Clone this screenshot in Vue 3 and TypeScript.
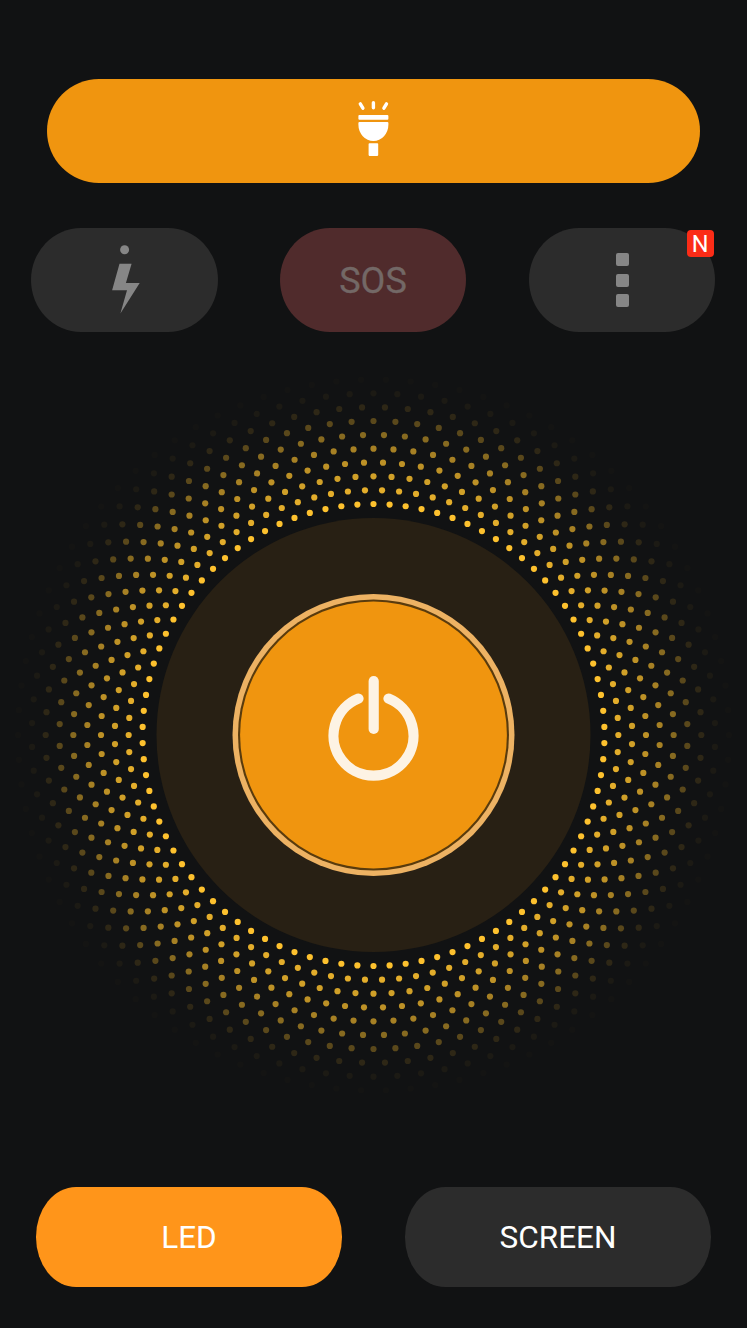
<script setup lang="ts">
interface Dot {
  x: number
  y: number
}
interface Ring {
  opacity: number
  dots: Dot[]
}

const DOTS_PER_RING = 90
const INNER_RADIUS = 231
const RING_GAP = 13.83
const opacities: number[] = [1, 0.89, 0.81, 0.73, 0.63, 0.5, 0.31, 0.12, 0.045, 0.012]

const rings: Ring[] = opacities.map((opacity, ring) => {
  const radius = INNER_RADIUS + ring * RING_GAP
  const dots = Array.from({ length: DOTS_PER_RING }, (_, i) => {
    const angle = ((i + (ring % 2) / 2) * 2 * Math.PI) / DOTS_PER_RING
    return { x: radius * Math.sin(angle), y: -radius * Math.cos(angle) }
  })
  return { opacity, dots }
})
</script>

<template>
  <main class="screen">
    <button class="torch" aria-label="Flashlight">
      <svg width="41" height="64" viewBox="0 0 41 64" fill="#fff">
        <g stroke="#fff" stroke-width="3.4" stroke-linecap="round">
          <path d="M7.3 8.9 9.9 13.2" />
          <path d="M20.4 7.8V12.8" />
          <path d="M33.5 8.9 30.9 13.2" />
        </g>
        <rect x="5.4" y="20" width="30" height="4.8" rx="1" />
        <path d="M5.4 28q0-1 1-1h28q1 0 1 1v1.6a15 16.4 0 0 1-30 0z" />
        <rect x="15.6" y="48.3" width="9.6" height="12.6" rx="0.8" />
      </svg>
    </button>

    <div class="modes">
      <button class="mode" aria-label="Strobe">
        <svg width="40" height="80" viewBox="0 0 40 80" fill="#868686">
          <circle cx="20.6" cy="9.8" r="4.5" />
          <path d="M15.5 23.7H27.6L21.9 43H35.7L16.4 73.6L23 50.3H8.1Z" />
        </svg>
      </button>
      <button class="mode sos">SOS</button>
      <button class="mode" aria-label="More">
        <span class="more"><i></i><i></i><i></i></span>
        <span class="badge">N</span>
      </button>
    </div>

    <svg class="dial" width="747" height="760" viewBox="-373.5 -380 747 760">
      <g v-for="(ring, r) in rings" :key="r" fill="#fdc12e" :opacity="ring.opacity">
        <circle v-for="(dot, i) in ring.dots" :key="i" :cx="dot.x" :cy="dot.y" r="3.1" />
      </g>
      <circle r="217" fill="#282014" />
      <circle r="141" fill="#edb263" />
      <circle r="135.5" fill="#593b0d" />
      <circle r="133.4" fill="#f0950f" />
      <g fill="none" stroke="#fdf3e4" stroke-width="10.2" stroke-linecap="round">
        <path d="M-15 -36.4A40 40 0 1 0 15 -36.4" />
        <path d="M0.2 -54V-6" />
      </g>
    </svg>

    <div class="sources">
      <button class="source active">LED</button>
      <button class="source">SCREEN</button>
    </div>
  </main>
</template>

<style>
body {
  margin: 0;
  background: #111213;
}
</style>

<style scoped>
.screen {
  box-sizing: border-box;
  width: 747px;
  height: 1328px;
  padding-top: 79px;
  background: #111213;
  font-family: Roboto, sans-serif;
  display: flex;
  flex-direction: column;
  overflow: hidden;
}
button {
  border: 0;
  padding: 0;
  font: inherit;
  display: flex;
  align-items: center;
  justify-content: center;
}
.torch {
  width: 653px;
  height: 103.5px;
  margin-left: 47px;
  flex: none;
  border-radius: 52px;
  background: #f0950f;
}
.torch svg {
  margin-top: -7px;
}
.modes {
  display: flex;
  justify-content: space-between;
  margin: 45.5px 32px 0 31px;
  flex: none;
}
.mode {
  position: relative;
  width: 186.5px;
  height: 104px;
  border-radius: 50px / 52px;
  background: #2c2c2c;
}
.sos {
  box-sizing: border-box;
  padding-top: 2px;
  background: #502b2c;
  color: #736866;
  font-size: 36px;
  -webkit-text-stroke: 0.3px #736866;
}
.more {
  display: flex;
  flex-direction: column;
  gap: 7.7px;
  margin-left: 1px;
}
.more i {
  width: 13px;
  height: 13px;
  border-radius: 2px;
  background: #868686;
}
.badge {
  position: absolute;
  top: 2px;
  right: 1px;
  width: 27.5px;
  height: 27px;
  border-radius: 4px;
  background: #fb2c17;
  color: #fff;
  font-size: 23.5px;
  line-height: 28px;
  text-align: center;
}
.dial {
  display: block;
  flex: none;
  margin-top: 23px;
}
.sources {
  display: flex;
  justify-content: space-between;
  margin: 72px 36px 0 36px;
  flex: none;
}
.source {
  width: 306px;
  height: 99.5px;
  border-radius: 40px / 49.75px;
  background: #2c2c2c;
  color: #fff;
  font-size: 31.5px;
  padding-top: 2px;
  box-sizing: border-box;
}
.source.active {
  background: #ff951a;
}
</style>
